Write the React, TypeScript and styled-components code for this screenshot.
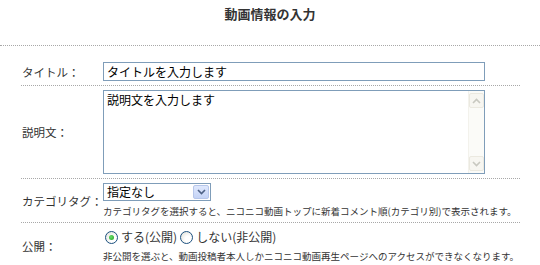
import React from "react";
import styled, { createGlobalStyle } from "styled-components";

const Global = createGlobalStyle`
  html, body { margin: 0; padding: 0; background: #fff; }
  body {
    font-family: "Noto Sans CJK JP", "Noto Sans", sans-serif;
    color: #333;
  }
`;

const Page = styled.div`
  width: 540px;
  height: 265px;
  overflow: hidden;
`;

const Header = styled.div`
  box-sizing: border-box;
  height: 46px;
  padding-top: 5px;
  display: flex;
  justify-content: center;
  border-bottom: 1px dotted #a8a8a8;
`;

const Title = styled.h1`
  margin: 0;
  font-size: 13px;
  line-height: 17px;
  font-weight: bold;
  color: #333;
`;

const Form = styled.div`
  margin: 12px 20px 0 21px;
`;

const Row = styled.div<{ $last?: boolean }>`
  display: grid;
  grid-template-columns: 82px 1fr;
  align-items: center;
  padding: ${(p) => (p.$last ? "5px 0 0" : "4px 0")};
  border-bottom: ${(p) => (p.$last ? "none" : "1px dotted #a8a8a8")};
`;

const Label = styled.div`
  font-size: 11.5px;
  line-height: 16px;
  color: #333;
  padding-left: 1px;
  white-space: nowrap;
`;

const Field = styled.div`
  display: flex;
  flex-direction: column;
  align-items: flex-start;
`;

const TextInput = styled.input`
  box-sizing: border-box;
  width: 382px;
  height: 19px;
  border: 1px solid #7f9db9;
  padding: 0 3px;
  font-family: inherit;
  font-size: 12px;
  color: #000;
  outline: none;
`;

const TextBox = styled.div`
  box-sizing: border-box;
  width: 382px;
  height: 84px;
  border: 1px solid #7f9db9;
  display: flex;
  background: #fff;
`;

const TextArea = styled.textarea`
  flex: 1;
  border: none;
  outline: none;
  resize: none;
  overflow: hidden;
  padding: 1px 3px;
  font-family: inherit;
  font-size: 12px;
  line-height: 15px;
  color: #000;
`;

const ScrollBar = styled.div`
  width: 15px;
  display: flex;
  flex-direction: column;
  justify-content: space-between;
  padding: 2px 0;
  background: #fbfbf8;
  border-left: 1px solid #f3f2ec;
`;

const ScrollBtn = styled.div`
  box-sizing: border-box;
  height: 15px;
  width: 15px;
  border: 1px solid #ebe9e0;
  border-radius: 2px;
  background: #f7f6f1;
  display: flex;
  align-items: center;
  justify-content: center;
`;

const SelectBox = styled.div`
  box-sizing: border-box;
  width: 108px;
  height: 18px;
  border: 1px solid #7f9db9;
  display: flex;
  align-items: center;
  background: #fff;
`;

const SelectText = styled.span`
  flex: 1;
  font-size: 12px;
  line-height: 16px;
  padding-left: 3px;
  color: #000;
`;

const SelectBtn = styled.span`
  box-sizing: border-box;
  width: 16px;
  height: 14px;
  margin-right: 1px;
  border: 1px solid #b6c6ea;
  border-radius: 2px;
  background: linear-gradient(#dfe8fd, #c4d3f6);
  display: flex;
  align-items: center;
  justify-content: center;
`;

const Help = styled.div`
  margin-top: 3px;
  font-size: 9.5px;
  line-height: 14px;
  color: #333;
  white-space: nowrap;
`;

const RadioGroup = styled.div`
  display: flex;
  align-items: center;
  padding-left: 2px;
  font-size: 12px;
  line-height: 18px;
  color: #333;
`;

const RadioItem = styled.label`
  display: flex;
  align-items: center;
  gap: 3px;
  margin-right: 3px;
`;

const RadioCircle = styled.span<{ $checked?: boolean }>`
  box-sizing: border-box;
  width: 13px;
  height: 13px;
  border-radius: 50%;
  border: 1px solid #1c5180;
  background: radial-gradient(circle at 65% 65%, #ffffff 30%, #dcdcd3 100%);
  display: flex;
  align-items: center;
  justify-content: center;
  &::after {
    content: "";
    display: ${(p) => (p.$checked ? "block" : "none")};
    width: 5px;
    height: 5px;
    border-radius: 50%;
    background: radial-gradient(circle at 40% 40%, #6ade6a, #21a121);
  }
`;

const Chevron = ({ up, color }: { up?: boolean; color: string }) => (
  <svg width="9" height="6" viewBox="0 0 9 6">
    <path
      d={up ? "M1 5 L4.5 1.5 L8 5" : "M1 1 L4.5 4.5 L8 1"}
      fill="none"
      stroke={color}
      strokeWidth="1.6"
    />
  </svg>
);

export default function App() {
  return (
    <Page>
      <Global />
      <Header>
        <Title>動画情報の入力</Title>
      </Header>
      <Form>
        <Row>
          <Label>タイトル：</Label>
          <Field>
            <TextInput defaultValue="タイトルを入力します" />
          </Field>
        </Row>
        <Row>
          <Label>説明文：</Label>
          <Field>
            <TextBox>
              <TextArea defaultValue="説明文を入力します" />
              <ScrollBar>
                <ScrollBtn>
                  <Chevron up color="#c8c8c0" />
                </ScrollBtn>
                <ScrollBtn>
                  <Chevron color="#c8c8c0" />
                </ScrollBtn>
              </ScrollBar>
            </TextBox>
          </Field>
        </Row>
        <Row>
          <Label>カテゴリタグ：</Label>
          <Field>
            <SelectBox>
              <SelectText>指定なし</SelectText>
              <SelectBtn>
                <Chevron color="#4d6185" />
              </SelectBtn>
            </SelectBox>
            <Help>
              カテゴリタグを選択すると、ニコニコ動画トップに新着コメント順(カテゴリ別)で表示されます。
            </Help>
          </Field>
        </Row>
        <Row $last>
          <Label>公開：</Label>
          <Field>
            <RadioGroup>
              <RadioItem>
                <RadioCircle $checked />
                する(公開)
              </RadioItem>
              <RadioItem>
                <RadioCircle />
                しない(非公開)
              </RadioItem>
            </RadioGroup>
            <Help>
              非公開を選ぶと、動画投稿者本人しかニコニコ動画再生ページへのアクセスができなくなります。
            </Help>
          </Field>
        </Row>
      </Form>
    </Page>
  );
}
